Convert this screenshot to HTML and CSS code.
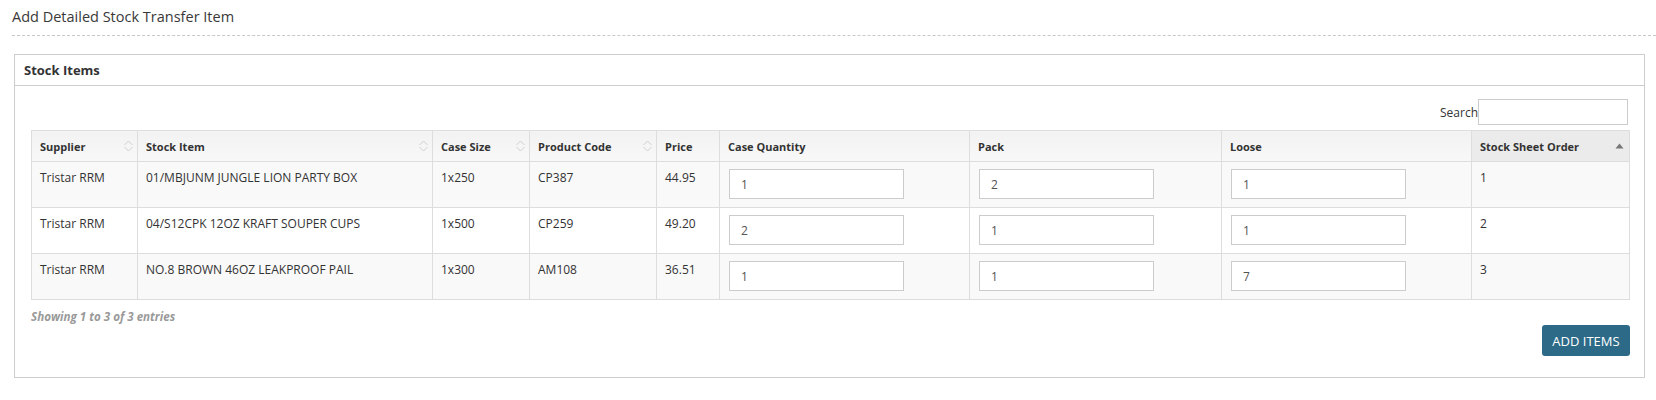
FILE: index.html
```html
<!DOCTYPE html>
<html lang="en">
<head>
<meta charset="utf-8">
<title>Add Detailed Stock Transfer Item</title>
<link rel="stylesheet" href="styles.css">
</head>
<body>
<div class="page">
  <h1 class="page-title">Add Detailed Stock Transfer Item</h1>
  <section class="panel">
    <div class="panel-heading">Stock Items</div>
    <div class="panel-body">
      <div class="filter">
        <label for="search">Search</label>
        <input id="search" class="search-input" type="text">
      </div>
      <table class="data-table">
        <colgroup>
          <col style="width:106px">
          <col style="width:295px">
          <col style="width:97px">
          <col style="width:127px">
          <col style="width:63px">
          <col style="width:250px">
          <col style="width:252px">
          <col style="width:250px">
          <col style="width:158px">
        </colgroup>
        <thead>
          <tr>
            <th class="sortable"><div class="th-inner"><span>Supplier</span><svg class="sort-both" width="9" height="12" viewBox="0 0 9 12"><polyline points="0.5,5 4.5,1 8.5,5"/><polyline points="0.5,7 4.5,11 8.5,7"/></svg></div></th>
            <th class="sortable"><div class="th-inner"><span>Stock Item</span><svg class="sort-both" width="9" height="12" viewBox="0 0 9 12"><polyline points="0.5,5 4.5,1 8.5,5"/><polyline points="0.5,7 4.5,11 8.5,7"/></svg></div></th>
            <th class="sortable"><div class="th-inner"><span>Case Size</span><svg class="sort-both" width="9" height="12" viewBox="0 0 9 12"><polyline points="0.5,5 4.5,1 8.5,5"/><polyline points="0.5,7 4.5,11 8.5,7"/></svg></div></th>
            <th class="sortable"><div class="th-inner"><span>Product Code</span><svg class="sort-both" width="9" height="12" viewBox="0 0 9 12"><polyline points="0.5,5 4.5,1 8.5,5"/><polyline points="0.5,7 4.5,11 8.5,7"/></svg></div></th>
            <th><div class="th-inner"><span>Price</span></div></th>
            <th><div class="th-inner"><span>Case Quantity</span></div></th>
            <th><div class="th-inner"><span>Pack</span></div></th>
            <th><div class="th-inner"><span>Loose</span></div></th>
            <th class="sorted"><div class="th-inner"><span>Stock Sheet Order</span><svg class="sort-asc" width="9" height="6" viewBox="0 0 9 6"><polygon points="0.5,5.5 4.5,0.5 8.5,5.5"/></svg></div></th>
          </tr>
        </thead>
        <tbody>
          <tr>
            <td>Tristar RRM</td>
            <td>01/MBJUNM JUNGLE LION PARTY BOX</td>
            <td>1x250</td>
            <td>CP387</td>
            <td>44.95</td>
            <td><input class="qty" type="text" value="1"></td>
            <td><input class="qty" type="text" value="2"></td>
            <td><input class="qty" type="text" value="1"></td>
            <td>1</td>
          </tr>
          <tr>
            <td>Tristar RRM</td>
            <td>04/S12CPK 12OZ KRAFT SOUPER CUPS</td>
            <td>1x500</td>
            <td>CP259</td>
            <td>49.20</td>
            <td><input class="qty" type="text" value="2"></td>
            <td><input class="qty" type="text" value="1"></td>
            <td><input class="qty" type="text" value="1"></td>
            <td>2</td>
          </tr>
          <tr>
            <td>Tristar RRM</td>
            <td>NO.8 BROWN 46OZ LEAKPROOF PAIL</td>
            <td>1x300</td>
            <td>AM108</td>
            <td>36.51</td>
            <td><input class="qty" type="text" value="1"></td>
            <td><input class="qty" type="text" value="1"></td>
            <td><input class="qty" type="text" value="7"></td>
            <td>3</td>
          </tr>
        </tbody>
      </table>
      <div class="info">Showing 1 to 3 of 3 entries</div>
      <div class="actions">
        <button class="btn-primary" type="button">ADD ITEMS</button>
      </div>
    </div>
  </section>
</div>
</body>
</html>
```

FILE: styles.css
```css
* { box-sizing: border-box; }

body {
  margin: 0;
  font-family: "Open Sans", "DejaVu Sans", sans-serif;
  font-size: 12px;
  color: #333;
  background: #fff;
}

.page {
  padding: 0 11px 0 14px;
}

.page-title {
  margin: 0 -11px 0 -2px;
  padding: 7px 0 8px 0;
  font-size: 14.5px;
  font-weight: 400;
  line-height: 20px;
  color: #393939;
  border-bottom: 1px dashed #c8c8c8;
}

.panel {
  margin-top: 18px;
  border: 1px solid #cdcdcd;
}

.panel-heading {
  height: 31px;
  line-height: 30px;
  padding: 0 9px;
  font-size: 13px;
  font-weight: 700;
  color: #333;
  border-bottom: 1px solid #cdcdcd;
}

.panel-body {
  padding: 13px 16px 21px;
}

.filter {
  display: flex;
  justify-content: flex-end;
  align-items: center;
}

.filter label {
  font-size: 12px;
  color: #333;
}

.search-input {
  width: 150px;
  height: 26px;
  border: 1px solid #ccc;
  margin: 0;
  font: inherit;
}

.data-table {
  margin-top: 5px;
  width: 100%;
  table-layout: fixed;
  border-collapse: collapse;
  border: 1px solid #ddd;
}

.data-table th {
  height: 31px;
  padding: 0 4px 0 8px;
  text-align: left;
  font-size: 11px;
  font-weight: 700;
  color: #333;
  background: linear-gradient(#f2f2f2, #f8f8f8);
  border: 1px solid #ddd;
}

.data-table th.sorted {
  background: #ebebeb;
  padding-right: 5px;
}

.th-inner {
  display: flex;
  justify-content: space-between;
  align-items: center;
}

.sort-both polyline {
  fill: none;
  stroke: #cfcfcf;
  stroke-width: 1;
}

.sort-asc polygon {
  fill: #777;
}

.data-table td {
  padding: 7px 8px 8px;
  vertical-align: top;
  line-height: 17px;
  border: 1px solid #ddd;
  background: #f9f9f9;
  white-space: nowrap;
}

.data-table tbody tr:nth-child(even) td {
  background: #fff;
}

.qty {
  display: block;
  width: 175px;
  height: 30px;
  margin: 0 0 0 1px;
  padding: 0 11px;
  border: 1px solid #ccc;
  background: #fff;
  font-family: "Open Sans", sans-serif;
  font-size: 12px;
  color: #555;
}

.info {
  margin-top: 8px;
  line-height: 17px;
  font-size: 11.6px;
  font-weight: 700;
  font-style: italic;
  color: #999;
}

.actions {
  display: flex;
  justify-content: flex-end;
  margin-right: -2px;
}

.btn-primary {
  width: 88px;
  height: 31px;
  border: none;
  border-radius: 3px;
  background: #2c6a88;
  color: #fff;
  font-family: "Open Sans", sans-serif;
  font-size: 13px;
  padding: 0;
}
```
